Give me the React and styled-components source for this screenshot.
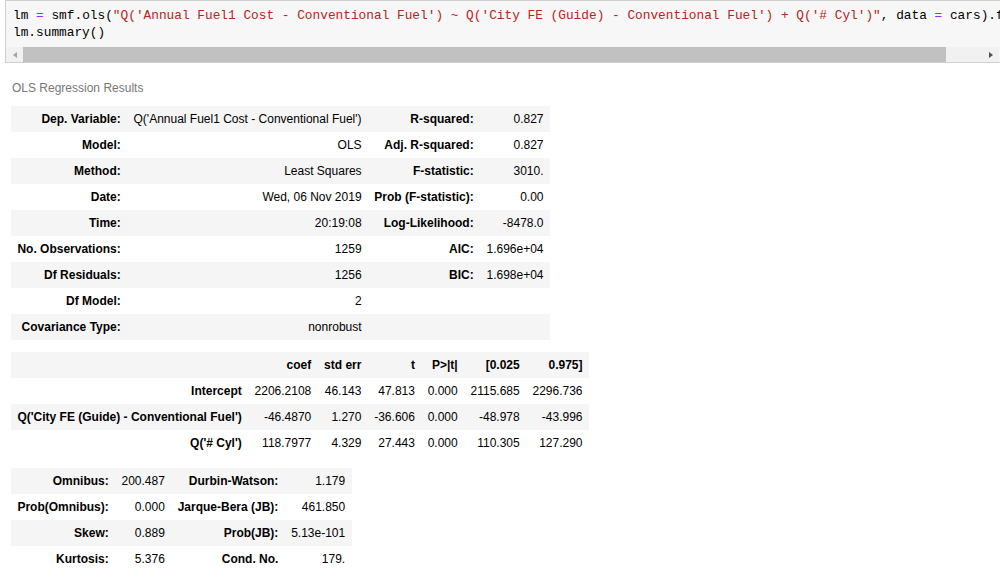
import React from 'react';
import styled, { createGlobalStyle } from 'styled-components';

const GlobalStyle = createGlobalStyle`
  html, body {
    margin: 0;
    background: #fff;
    overflow: hidden;
  }
`;

const Page = styled.div`
  width: 1000px;
  height: 586px;
  overflow: hidden;
`;

const CodeCell = styled.div`
  margin-left: 5px;
  width: 1010px;
  border: 1px solid #cfcfcf;
  background: #f7f7f7;
`;

const CodeArea = styled.pre`
  margin: 0;
  padding: 6px 0 6px 7px;
  font-family: "Liberation Mono", monospace;
  font-size: 12.8px;
  line-height: 17px;
  color: #000;
  white-space: pre;
  overflow: hidden;
`;

const tokenColors = {
  plain: '#000',
  op: '#aa22ff',
  str: '#ba2121',
};

const Token = styled.span`
  color: ${p => tokenColors[p.$kind]};
`;

const ScrollBar = styled.div`
  display: flex;
  align-items: stretch;
  height: 15px;
  width: 993px;
  background: #f1f1f1;
`;

const ArrowButton = styled.div`
  flex: 0 0 17px;
  display: flex;
  align-items: center;
  justify-content: center;
  &::before {
    content: '';
    width: 0;
    height: 0;
    border-top: 3.5px solid transparent;
    border-bottom: 3.5px solid transparent;
    ${p => p.$dir === 'left'
      ? 'border-right: 4px solid #a3a3a3;'
      : 'border-left: 4px solid #505050;'}
  }
`;

const Thumb = styled.div`
  flex: 0 0 923px;
  background: #c1c1c1;
`;

const Track = styled.div`
  flex: 1;
`;

const Output = styled.div`
  padding: 0 0 0 11px;
  margin-top: 10px;
  font-family: "Liberation Sans", Arial, sans-serif;
`;

const Table = styled.table`
  border-collapse: collapse;
  border-spacing: 0;
  font-size: 12px;
  color: #000;
  margin-bottom: 12px;

  caption {
    caption-side: top;
    text-align: left;
    color: #777;
    padding: 7px 0 9px 1px;
    line-height: 17px;
  }

  tr:nth-child(odd) {
    background: #f5f5f5;
  }

  th, td {
    padding: 6px 6.4px;
    line-height: 14px;
    text-align: right;
    vertical-align: middle;
    white-space: nowrap;
  }

  th {
    font-weight: bold;
  }

  td {
    font-weight: normal;
  }
`;

const codeLines = [
  [
    ['plain', 'lm '], ['op', '='], ['plain', ' smf.ols('],
    ['str', `"Q('Annual Fuel1 Cost - Conventional Fuel') ~ Q('City FE (Guide) - Conventional Fuel') + Q('# Cyl')"`],
    ['plain', ', data '], ['op', '='], ['plain', ' cars).fit()'],
  ],
  [['plain', 'lm.summary()']],
];

const summaryRows = [
  ['Dep. Variable:', "Q('Annual Fuel1 Cost - Conventional Fuel')", 'R-squared:', '0.827'],
  ['Model:', 'OLS', 'Adj. R-squared:', '0.827'],
  ['Method:', 'Least Squares', 'F-statistic:', '3010.'],
  ['Date:', 'Wed, 06 Nov 2019', 'Prob (F-statistic):', '0.00'],
  ['Time:', '20:19:08', 'Log-Likelihood:', '-8478.0'],
  ['No. Observations:', '1259', 'AIC:', '1.696e+04'],
  ['Df Residuals:', '1256', 'BIC:', '1.698e+04'],
  ['Df Model:', '2', '', ''],
  ['Covariance Type:', 'nonrobust', '', ''],
];

const coefHeader = ['', 'coef', 'std err', 't', 'P>|t|', '[0.025', '0.975]'];

const coefRows = [
  ['Intercept', '2206.2108', '46.143', '47.813', '0.000', '2115.685', '2296.736'],
  ["Q('City FE (Guide) - Conventional Fuel')", '-46.4870', '1.270', '-36.606', '0.000', '-48.978', '-43.996'],
  ["Q('# Cyl')", '118.7977', '4.329', '27.443', '0.000', '110.305', '127.290'],
];

const diagRows = [
  ['Omnibus:', '200.487', 'Durbin-Watson:', '1.179'],
  ['Prob(Omnibus):', '0.000', 'Jarque-Bera (JB):', '461.850'],
  ['Skew:', '0.889', 'Prob(JB):', '5.13e-101'],
  ['Kurtosis:', '5.376', 'Cond. No.', '179.'],
];

// label / value pairs, labels in th like statsmodels emits them
const PairRow = ({ cells }) => (
  <tr>
    <th>{cells[0]}</th>
    <td>{cells[1]}</td>
    <th>{cells[2]}</th>
    <td>{cells[3]}</td>
  </tr>
);

export default function App() {
  return (
    <Page>
      <GlobalStyle />
      <CodeCell>
        <CodeArea>
          {codeLines.map((line, i) => (
            <div key={i}>
              {line.map(([kind, text], j) => (
                <Token key={j} $kind={kind}>{text}</Token>
              ))}
            </div>
          ))}
        </CodeArea>
        <ScrollBar>
          <ArrowButton $dir="left" />
          <Thumb />
          <Track />
          <ArrowButton $dir="right" />
        </ScrollBar>
      </CodeCell>

      <Output>
        <Table>
          <caption>OLS Regression Results</caption>
          <tbody>
            {summaryRows.map((r, i) => <PairRow key={i} cells={r} />)}
          </tbody>
        </Table>

        <Table>
          <tbody>
            <tr>
              {coefHeader.map((h, i) => <th key={i}>{h}</th>)}
            </tr>
            {coefRows.map((r, i) => (
              <tr key={i}>
                <th>{r[0]}</th>
                {r.slice(1).map((v, j) => <td key={j}>{v}</td>)}
              </tr>
            ))}
          </tbody>
        </Table>

        <Table>
          <tbody>
            {diagRows.map((r, i) => <PairRow key={i} cells={r} />)}
          </tbody>
        </Table>
      </Output>
    </Page>
  );
}
